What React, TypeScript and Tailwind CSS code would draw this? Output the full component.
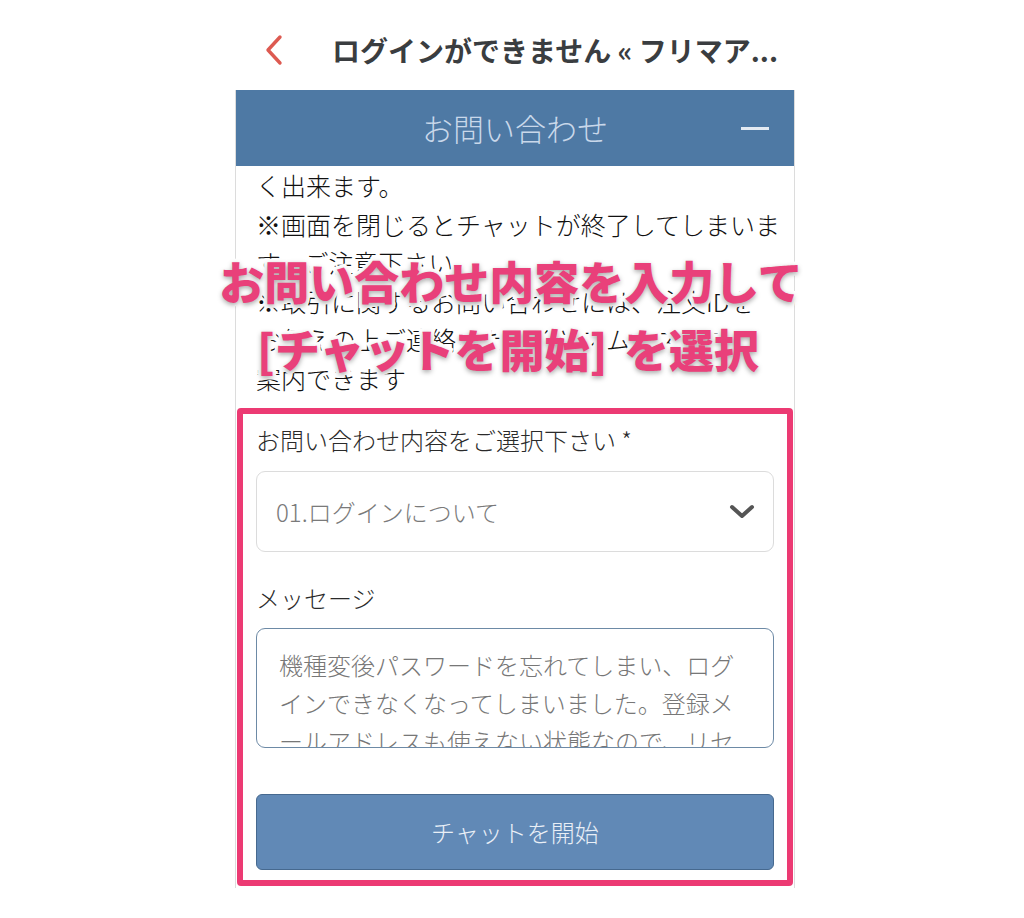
import React from "react";

const jp = "font-['Noto_Sans_CJK_JP','Noto_Sans',sans-serif]";

function BackChevron() {
  return (
    <svg width="22" height="32" viewBox="0 0 22 32" fill="none">
      <path d="M17 3 L5 16 L17 29" stroke="#dd5a51" strokeWidth="3.4" strokeLinecap="round" strokeLinejoin="round" />
    </svg>
  );
}

function SelectChevron() {
  return (
    <svg width="26" height="18" viewBox="0 0 26 18" fill="none">
      <path d="M3 4 L13 13 L23 4" stroke="#555" strokeWidth="4" strokeLinecap="round" strokeLinejoin="round" />
    </svg>
  );
}

export default function App() {
  const bodyLines = [
    "く出来ます。",
    "※画面を閉じるとチャットが終了してしまいま",
    "す。ご注意下さい。",
    "※取引に関するお問い合わせには、注文IDを",
    "お伝えの上ご連絡いただくとスムーズにご",
    "案内できます",
  ];

  const messageLines = [
    "機種変後パスワードを忘れてしまい、ログ",
    "インできなくなってしまいました。登録メ",
    "ールアドレスも使えない状態なので、リセ",
  ];

  return (
    <div className={`relative h-[918px] w-[1024px] overflow-hidden bg-white ${jp}`}>
      <div className="ml-[235px] w-[560px]">
        {/* top bar */}
        <div className="flex h-[90px] items-center pl-[28px] pt-[10px]">
          <BackChevron />
          <div className="ml-[47px] whitespace-nowrap text-[28px] font-bold text-[#3a3d40]">
            ログインができません « フリマア...
          </div>
        </div>

        {/* panel */}
        <div className="h-[798px] border-x border-[#dcdcdc]">
          <div className="grid h-[76px] grid-cols-[1fr_auto_1fr] items-center bg-[#4e79a4]">
            <div />
            <div className="text-[31px] font-light text-[#c9d8ea]">お問い合わせ</div>
            <div className="flex justify-end pr-[25px]">
              <div className="h-[3px] w-[28px] bg-[#e3eaf2]" />
            </div>
          </div>

          <div className="h-[240px] overflow-hidden px-[20px] text-[25px] font-light leading-[38.5px] text-[#111]">
            {bodyLines.map((l) => (
              <div key={l} className="whitespace-nowrap">{l}</div>
            ))}
          </div>

          <div className="px-[20px] pt-[18px]">
            <div className="text-[24px] font-light leading-[32px] text-[#2a2a2a]">お問い合わせ内容をご選択下さい *</div>
            <div className="mt-[15px] flex h-[81px] items-center justify-between rounded-[9px] border border-[#dcdcdc] pl-[19px] pr-[18px]">
              <span className="text-[24px] font-light text-[#7a7a7a]">01.ログインについて</span>
              <SelectChevron />
            </div>

            <div className="mt-[30px] text-[24px] font-light leading-[32px] text-[#2a2a2a]">メッセージ</div>
            <div className="mt-[14px] h-[120px] overflow-hidden rounded-[9px] border border-[#6d8aa6] px-[22px] pt-[17px] text-[24px] font-light leading-[38px] text-[#777]">
              {messageLines.map((l) => (
                <div key={l} className="whitespace-nowrap">{l}</div>
              ))}
            </div>

            <button className="mt-[46px] flex h-[76px] w-full items-center justify-center rounded-[6px] border border-[#46698f] bg-[#6189b6] text-[24px] font-light text-[#e9eff6]">
              チャットを開始
            </button>
          </div>
        </div>
      </div>

      {/* annotation text */}
      <div className="pointer-events-none absolute left-0 top-[247px] w-[1024px] text-center text-[45px] font-black leading-[68px] text-[#e9407a] [-webkit-text-stroke:7px_white] [paint-order:stroke_fill] [text-shadow:0_2px_5px_rgba(0,0,0,0.35)]">
        <div className="ml-[-2px] whitespace-nowrap">お問い合わせ内容を入力して</div>
        <div className="ml-[-8px] whitespace-nowrap">
          [チャットを開始] <span className="ml-[6px]">を選択</span>
        </div>
      </div>

      {/* annotation box */}
      <div className="pointer-events-none absolute left-[237px] top-[408px] h-[478px] w-[556px] rounded-[4px] border-[6px] border-[#ec3a73]" />
    </div>
  );
}
